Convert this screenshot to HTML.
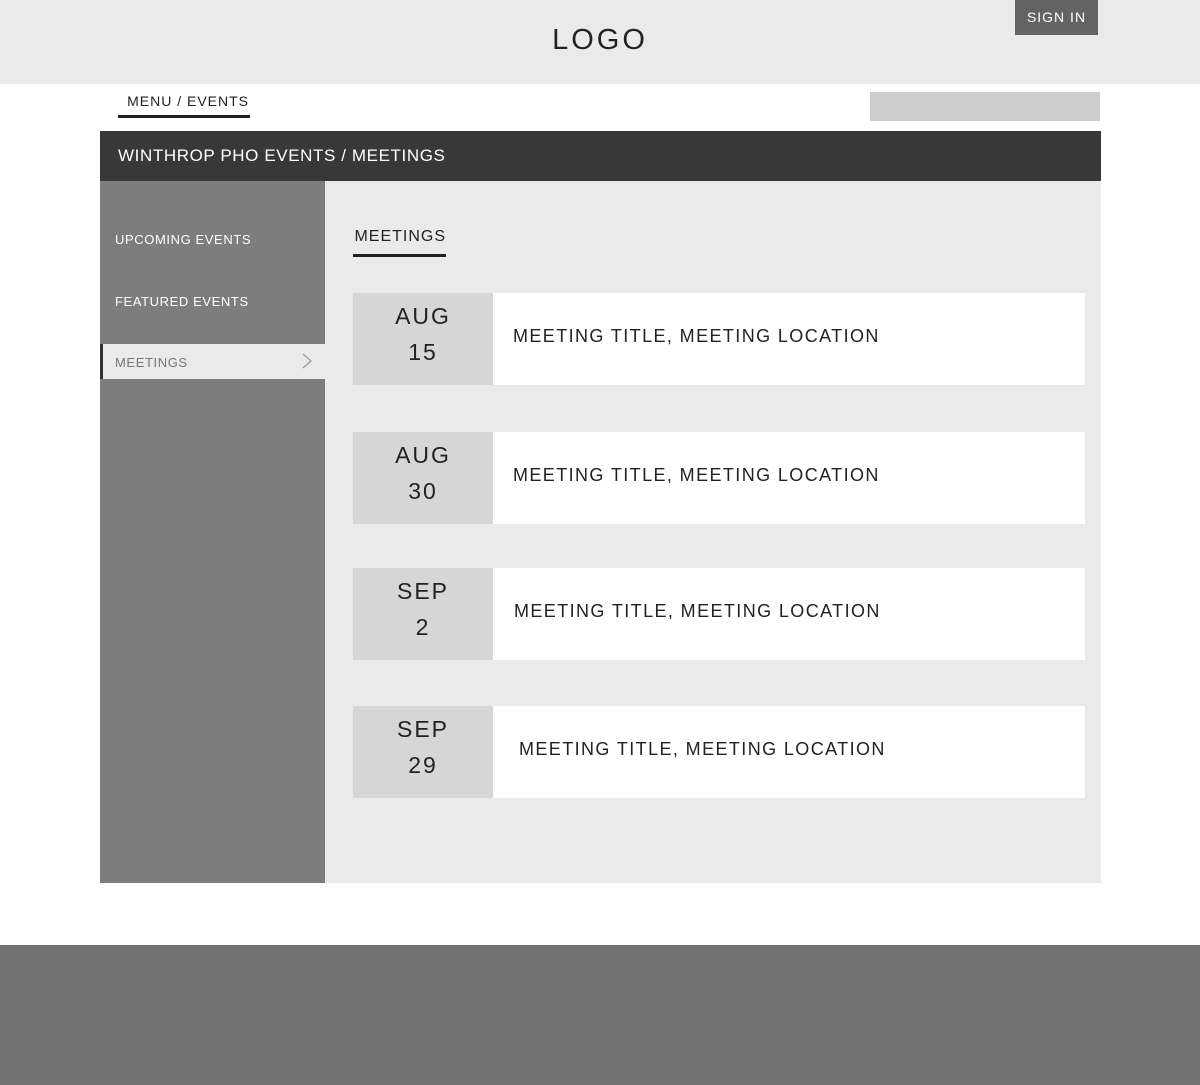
<!DOCTYPE html>
<html><head><style>
*{margin:0;padding:0;box-sizing:border-box}
body{width:1200px;height:1085px;position:relative;background:#fff;font-family:"Liberation Sans",sans-serif;overflow:hidden}
.a{position:absolute;white-space:nowrap}
.hdr{left:0;top:0;width:1200px;height:84px;background:#eaeaea}
.logo{left:0;width:1200px;top:24px;text-align:center;font-size:29px;letter-spacing:3px;color:#222}
.sign{left:1015px;top:0;width:83px;height:35px;background:#636363;color:#fff;font-size:14px;letter-spacing:1px;line-height:35px;text-align:center}
.crumb{left:118px;top:93px;width:132px;height:25px;border-bottom:3px solid #222;font-size:14px;letter-spacing:1px;color:#222;text-align:right;padding-right:1px}
.search{left:870px;top:92px;width:230px;height:29px;background:#ccc}
.bar{left:100px;top:131px;width:1001px;height:50px;background:#383838;color:#fff;font-size:17px;letter-spacing:0.6px;line-height:50px;padding-left:18px}
.side{left:100px;top:181px;width:225px;height:702px;background:#7d7d7d}
.cont{left:325px;top:181px;width:776px;height:702px;background:#eaeaea}
.si{left:115px;color:#fff;font-size:13px;letter-spacing:0.6px}
.act{left:100px;top:344px;width:225px;height:35px;background:#eaeaea;border-left:3px solid #333}
.mt{left:353px;top:228px;width:93px;height:29px;border-bottom:3px solid #222;font-size:16px;letter-spacing:1px;color:#222;text-align:right}
.d{left:353px;width:140px;height:92px;background:#d6d6d6;text-align:center;font-size:23px;letter-spacing:2px;color:#222;line-height:36px;padding-top:5px}
.c{left:493px;width:592px;height:92px;background:#fff;font-size:18px;letter-spacing:1.4px;color:#222;line-height:86px;padding-left:20px}
.foot{left:0;top:945px;width:1200px;height:140px;background:#727272}
</style></head><body>
<div class="a hdr"></div>
<div class="a logo">LOGO</div>
<div class="a sign">SIGN IN</div>
<div class="a crumb">MENU / EVENTS</div>
<div class="a search"></div>
<div class="a bar">WINTHROP PHO EVENTS / MEETINGS</div>
<div class="a side"></div>
<div class="a cont"></div>
<div class="a si" style="top:232px">UPCOMING EVENTS</div>
<div class="a si" style="top:294px">FEATURED EVENTS</div>
<div class="a act"></div>
<div class="a si" style="top:355px;color:#777">MEETINGS</div>
<svg class="a" style="left:300px;top:352px" width="14" height="18"><path d="M3 2 L11 9 L3 16" fill="none" stroke="#999" stroke-width="1.2"/></svg>
<div class="a mt">MEETINGS</div>
<div class="a d" style="top:293px">AUG<br>15</div><div class="a c" style="top:293px">MEETING TITLE, MEETING LOCATION</div>
<div class="a d" style="top:432px">AUG<br>30</div><div class="a c" style="top:432px">MEETING TITLE, MEETING LOCATION</div>
<div class="a d" style="top:568px">SEP<br>2</div><div class="a c" style="top:568px;padding-left:21px">MEETING TITLE, MEETING LOCATION</div>
<div class="a d" style="top:706px">SEP<br>29</div><div class="a c" style="top:706px;padding-left:26px">MEETING TITLE, MEETING LOCATION</div>
<div class="a foot"></div>
</body></html>
